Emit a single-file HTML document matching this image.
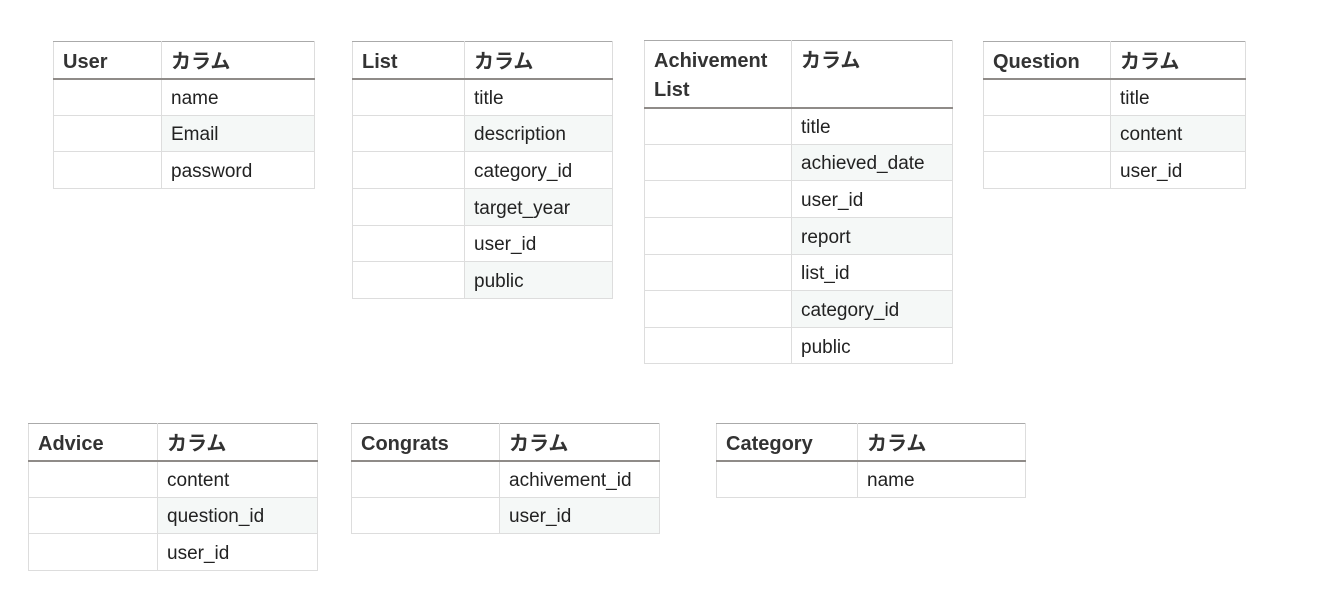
<!DOCTYPE html>
<html><head><meta charset="utf-8"><style>
body{margin:0;width:1320px;height:608px;background:#fff;position:relative;font-family:"Liberation Sans","Noto Sans CJK JP",sans-serif;color:#333}
table{position:absolute;border-collapse:collapse;table-layout:fixed;border:1px solid #aaa}
td,th{border:1px solid #ddd;padding:0 0 0 9px;text-align:left;font-size:19px;vertical-align:middle;white-space:nowrap;overflow:hidden}
th{font-weight:bold;font-size:20px;height:37px;border-bottom:2px solid #8f8b88;border-top:1px solid #aaa;vertical-align:top;padding-top:6px;line-height:29px;box-sizing:border-box}
td{height:36.65px;color:#222;padding-top:4px;box-sizing:border-box}
tr:nth-child(even) td+td{background:#f5f8f7}
</style></head><body>

<table style="left:53px;top:41px;width:262px"><colgroup><col style="width:108px"><col></colgroup>
<thead><tr><th>User</th><th>カラム</th></tr></thead><tbody>
<tr><td></td><td>name</td></tr><tr><td></td><td>Email</td></tr><tr><td></td><td>password</td></tr></tbody></table>

<table style="left:352px;top:41px;width:261px"><colgroup><col style="width:112px"><col></colgroup>
<thead><tr><th>List</th><th>カラム</th></tr></thead><tbody>
<tr><td></td><td>title</td></tr><tr><td></td><td>description</td></tr><tr><td></td><td>category_id</td></tr><tr><td></td><td>target_year</td></tr><tr><td></td><td>user_id</td></tr><tr><td></td><td>public</td></tr></tbody></table>

<table style="left:644px;top:40px;width:309px"><colgroup><col style="width:147px"><col></colgroup>
<thead><tr><th style="height:67px;white-space:normal">Achivement List</th><th style="height:67px">カラム</th></tr></thead><tbody>
<tr><td></td><td>title</td></tr><tr><td></td><td>achieved_date</td></tr><tr><td></td><td>user_id</td></tr><tr><td></td><td>report</td></tr><tr><td></td><td>list_id</td></tr><tr><td></td><td>category_id</td></tr><tr><td></td><td>public</td></tr></tbody></table>

<table style="left:983px;top:41px;width:263px"><colgroup><col style="width:127px"><col></colgroup>
<thead><tr><th>Question</th><th>カラム</th></tr></thead><tbody>
<tr><td></td><td>title</td></tr><tr><td></td><td>content</td></tr><tr><td></td><td>user_id</td></tr></tbody></table>

<table style="left:28px;top:423px;width:290px"><colgroup><col style="width:129px"><col></colgroup>
<thead><tr><th>Advice</th><th>カラム</th></tr></thead><tbody>
<tr><td></td><td>content</td></tr><tr><td></td><td>question_id</td></tr><tr><td></td><td>user_id</td></tr></tbody></table>

<table style="left:351px;top:423px;width:309px"><colgroup><col style="width:148px"><col></colgroup>
<thead><tr><th>Congrats</th><th>カラム</th></tr></thead><tbody>
<tr><td></td><td>achivement_id</td></tr><tr><td></td><td>user_id</td></tr></tbody></table>

<table style="left:716px;top:423px;width:310px"><colgroup><col style="width:141px"><col></colgroup>
<thead><tr><th>Category</th><th>カラム</th></tr></thead><tbody>
<tr><td></td><td>name</td></tr></tbody></table>

</body></html>
